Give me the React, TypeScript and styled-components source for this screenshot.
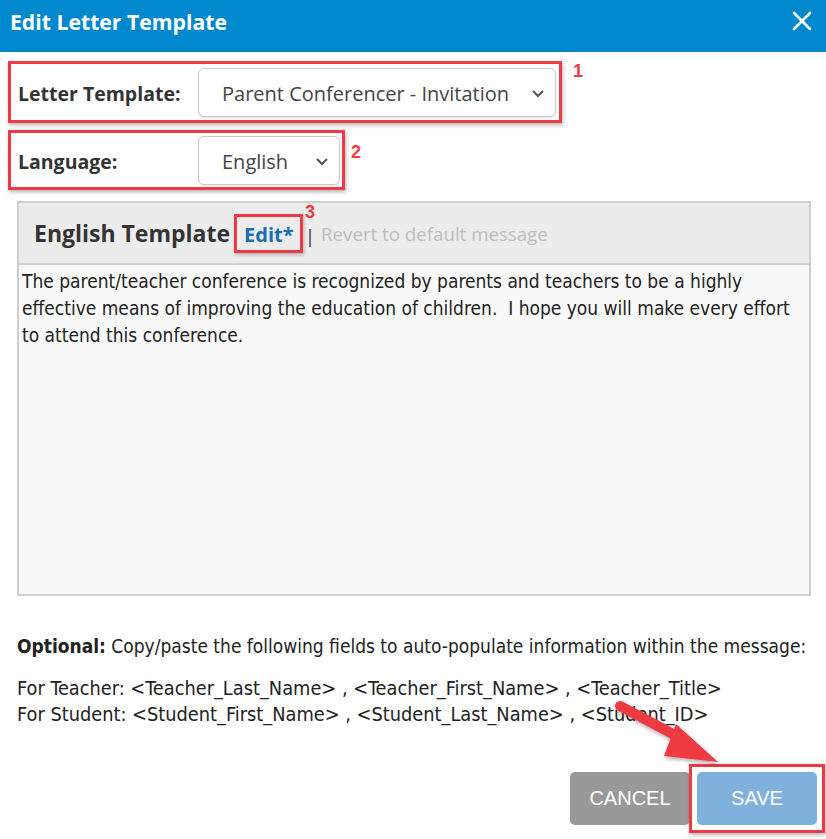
import React from 'react'
import styled, { createGlobalStyle } from 'styled-components'

const GlobalStyle = createGlobalStyle`
	html, body {
		margin: 0;
		padding: 0;
		background: #ffffff;
	}
	body {
		font-family: 'Open Sans', 'Noto Sans', Arial, sans-serif;
		color: #333333;
	}
`

const highlightRed = '#ee3a43'

export default function App(): JSX.Element {
	return (
		<Dialog>
			<GlobalStyle />
			<Header>
				<Title>Edit Letter Template</Title>
				<CloseButton aria-label="close">
					<svg width="20" height="20" viewBox="0 0 20 20">
						<path d="M2 2 L18 18 M18 2 L2 18" stroke="#fff" strokeWidth="2.6" strokeLinecap="round" />
					</svg>
				</CloseButton>
			</Header>
			<Content>
				<Highlight $width={554} $height={62}>
					<FieldLabel>Letter Template:</FieldLabel>
					<SelectBox $width={358}>
						<span>Parent Conferencer - Invitation</span>
						<Chevron />
					</SelectBox>
					<Callout $top={-2} $left={562}>1</Callout>
				</Highlight>
				<Highlight $width={337} $height={60} $mt={7}>
					<FieldLabel>Language:</FieldLabel>
					<SelectBox $width={142}>
						<span>English</span>
						<Chevron />
					</SelectBox>
					<Callout $top={10} $left={340}>2</Callout>
				</Highlight>
				<Panel>
					<PanelHeader>
						<PanelTitle>English Template</PanelTitle>
						<EditLink>
							Edit*
							<Callout $top={-14} $left={68}>3</Callout>
						</EditLink>
						<Divider>|</Divider>
						<RevertLink>Revert to default message</RevertLink>
					</PanelHeader>
					<PanelBody>
						The parent/teacher conference is recognized by parents and teachers to be a highly effective
						means of improving the education of children.&nbsp; I hope you will make every effort to
						attend this conference.
					</PanelBody>
				</Panel>
				<Optional>
					<strong>Optional:</strong> Copy/paste the following fields to auto-populate information within the
					message:
				</Optional>
				<Fields>
					<div>For Teacher: &lt;Teacher_Last_Name&gt; , &lt;Teacher_First_Name&gt; , &lt;Teacher_Title&gt;</div>
					<div>For Student: &lt;Student_First_Name&gt; , &lt;Student_Last_Name&gt; , &lt;Student_ID&gt;</div>
				</Fields>
				<Actions>
					<Button $variant="cancel">CANCEL</Button>
					<SaveFrame>
						<Button $variant="save">SAVE</Button>
					</SaveFrame>
				</Actions>
			</Content>
			<Arrow width="130" height="80" viewBox="0 0 130 80">
				<defs>
					<filter id="sh" x="-20%" y="-20%" width="140%" height="140%">
						<feDropShadow dx="1" dy="2" stdDeviation="2" floodColor="#000" floodOpacity="0.35" />
					</filter>
				</defs>
				<g filter="url(#sh)">
					<line x1="14" y1="8" x2="82" y2="44" stroke={highlightRed} strokeWidth="10" strokeLinecap="round" />
					<polygon points="70,26 112,64 58,58" fill={highlightRed} />
				</g>
			</Arrow>
		</Dialog>
	)
}

const Chevron = () => (
	<svg width="14" height="9" viewBox="0 0 14 9">
		<path d="M2 2 L7 7 L12 2" fill="none" stroke="#555" strokeWidth="2" />
	</svg>
)

const Dialog = styled.div`
	position: relative;
	width: 826px;
	height: 839px;
	overflow: hidden;
	background: #fff;
`

const Header = styled.div`
	display: flex;
	align-items: center;
	justify-content: space-between;
	height: 52px;
	padding: 0 14px 0 10px;
	background: #0088cc;
	box-sizing: border-box;
`

const Title = styled.h1`
	margin: 0 0 10px;
	font-family: 'Open Sans', 'Noto Sans', sans-serif;
	font-size: 21.2px;
	font-weight: 700;
	color: #fff;
`

const CloseButton = styled.div`
	display: flex;
	margin-bottom: 10px;
`

const Content = styled.div`
	display: flex;
	flex-direction: column;
	padding: 9px 0 0 8px;
`

const Highlight = styled.div<{ $width: number; $height: number; $mt?: number }>`
	position: relative;
	display: flex;
	align-items: center;
	width: ${(p) => p.$width}px;
	height: ${(p) => p.$height}px;
	margin-top: ${(p) => p.$mt ?? 0}px;
	border: 3px solid ${highlightRed};
	box-sizing: border-box;
	padding-left: 7px;
	box-shadow: 1px 2px 4px rgba(0, 0, 0, 0.3);
`

const FieldLabel = styled.div`
	width: 180px;
	padding-top: 3px;
	font-size: 19.5px;
	font-weight: 700;
	color: #333;
`

const SelectBox = styled.div<{ $width: number }>`
	display: flex;
	align-items: center;
	justify-content: space-between;
	width: ${(p) => p.$width}px;
	height: 49px;
	box-sizing: border-box;
	padding: 3px 10px 0 23px;
	border: 1px solid #c8c8c8;
	border-radius: 6px;
	box-shadow: 0 1px 2px rgba(0, 0, 0, 0.12);
	font-size: 20px;
	color: #444;
`

const Callout = styled.span<{ $top: number; $left: number }>`
	position: absolute;
	top: ${(p) => p.$top}px;
	left: ${(p) => p.$left}px;
	font-family: 'Liberation Sans', Arial, sans-serif;
	font-size: 18px;
	line-height: 1;
	font-weight: 700;
	color: ${highlightRed};
`

const Panel = styled.div`
	display: flex;
	flex-direction: column;
	width: 794px;
	height: 395px;
	margin: 11px 0 0 9px;
	border: 2px solid #cfcfcf;
	box-sizing: border-box;
	background: #f9f9f9;
`

const PanelHeader = styled.div`
	display: flex;
	align-items: center;
	height: 62px;
	padding-left: 15px;
	background: #ececec;
	border-bottom: 2px solid #cfcfcf;
	box-sizing: border-box;
`

const PanelTitle = styled.span`
	font-size: 23px;
	font-weight: 700;
	color: #333;
	margin-right: 4px;
`

const EditLink = styled.span`
	position: relative;
	display: flex;
	align-items: center;
	height: 39px;
	box-sizing: border-box;
	padding: 2px 6px 0 7px;
	border: 3px solid ${highlightRed};
	box-shadow: 1px 2px 3px rgba(0, 0, 0, 0.25);
	font-size: 20px;
	font-weight: 700;
	color: #1a6db0;
`

const Divider = styled.span`
	margin: 6px 6px 0 2px;
	font-size: 19px;
	line-height: 1;
	color: #335;
`

const RevertLink = styled.span`
	font-size: 18.7px;
	color: #bdbdbd;
`

const PanelBody = styled.div`
	padding: 3px 6px 0 3px;
	font-family: 'DejaVu Sans Condensed', 'Liberation Sans', Arial, sans-serif;
	font-size: 19px;
	line-height: 27px;
	color: #222;
`

const Optional = styled.div`
	margin: 39px 0 0 9px;
	font-family: 'DejaVu Sans Condensed', 'Liberation Sans', Arial, sans-serif;
	font-size: 19px;
	color: #222;
`

const Fields = styled.div`
	margin: 19px 0 0 9px;
	font-family: 'DejaVu Sans Condensed', 'Liberation Sans', Arial, sans-serif;
	font-size: 19.8px;
	line-height: 26px;
	color: #222;
`

const Actions = styled.div`
	display: flex;
	align-items: center;
	justify-content: flex-end;
	margin: 36px 1px 0 0;
`

const SaveFrame = styled.div`
	display: flex;
	padding: 5px;
	border: 3px solid ${highlightRed};
	box-shadow: 1px 2px 4px rgba(0, 0, 0, 0.3);
	margin-left: -1px;
`

const Button = styled.div<{ $variant: 'cancel' | 'save' }>`
	display: flex;
	align-items: center;
	justify-content: center;
	width: 120px;
	height: 53px;
	border-radius: 5px;
	font-family: 'Liberation Sans', Arial, sans-serif;
	font-size: 20px;
	color: #fff;
	background: ${(p) => (p.$variant === 'save' ? '#80b1dd' : '#999999')};
`

const Arrow = styled.svg`
	position: absolute;
	left: 606px;
	top: 698px;
	overflow: visible;
`
